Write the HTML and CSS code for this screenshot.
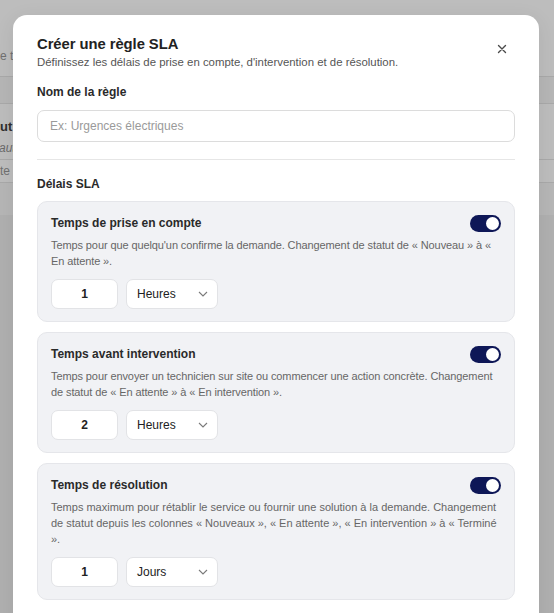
FILE: index.html
```html
<!DOCTYPE html>
<html lang="fr">
<head>
<meta charset="utf-8">
<link rel="stylesheet" href="styles.css">
</head>
<body>
<div class="page">
  <div class="bg-top"><span class="bg-text">e traitement des demandes</span></div>
  <div class="bg-head"></div>
  <div class="bg-row bg-row-tall"><span class="bg-bold">ut actif</span><span class="bg-italic">aut par défaut</span></div>
  <div class="bg-row"><span class="bg-text">te urgente</span></div>
  <div class="bg-band"></div>
  <div class="bg-rest"></div>
</div>

<div class="modal">
  <div class="modal-head">
    <div class="head-text">
      <h1 class="modal-title">Créer une règle SLA</h1>
      <p class="modal-sub">Définissez les délais de prise en compte, d'intervention et de résolution.</p>
    </div>
    <button class="close" aria-label="Fermer">
      <svg width="10" height="10" viewBox="0 0 10 10"><path d="M1.5 1.5 L8.5 8.5 M8.5 1.5 L1.5 8.5" stroke="#4a4a4a" stroke-width="1.4" stroke-linecap="round"/></svg>
    </button>
  </div>

  <label class="field-label">Nom de la règle</label>
  <div class="text-input">Ex: Urgences électriques</div>

  <div class="divider"></div>

  <div class="section-title">Délais SLA</div>

  <div class="cards">
    <div class="card">
      <div class="card-head">
        <span class="card-title">Temps de prise en compte</span>
        <span class="toggle"><span class="knob"></span></span>
      </div>
      <p class="card-desc">Temps pour que quelqu'un confirme la demande. Changement de statut de « Nouveau » à « En attente ».</p>
      <div class="controls">
        <div class="num">1</div>
        <div class="select"><span>Heures</span><svg width="10" height="6" viewBox="0 0 10 6"><path d="M1 1 L5 5 L9 1" fill="none" stroke="#7a7a7a" stroke-width="1.1"/></svg></div>
      </div>
    </div>

    <div class="card">
      <div class="card-head">
        <span class="card-title">Temps avant intervention</span>
        <span class="toggle"><span class="knob"></span></span>
      </div>
      <p class="card-desc">Temps pour envoyer un technicien sur site ou commencer une action concrète. Changement de statut de « En attente » à « En intervention ».</p>
      <div class="controls">
        <div class="num">2</div>
        <div class="select"><span>Heures</span><svg width="10" height="6" viewBox="0 0 10 6"><path d="M1 1 L5 5 L9 1" fill="none" stroke="#7a7a7a" stroke-width="1.1"/></svg></div>
      </div>
    </div>

    <div class="card">
      <div class="card-head">
        <span class="card-title">Temps de résolution</span>
        <span class="toggle"><span class="knob"></span></span>
      </div>
      <p class="card-desc card-desc-loose">Temps maximum pour rétablir le service ou fournir une solution à la demande. Changement de statut depuis les colonnes « Nouveaux », « En attente », « En intervention » à « Terminé ».</p>
      <div class="controls">
        <div class="num">1</div>
        <div class="select"><span>Jours</span><svg width="10" height="6" viewBox="0 0 10 6"><path d="M1 1 L5 5 L9 1" fill="none" stroke="#7a7a7a" stroke-width="1.1"/></svg></div>
      </div>
    </div>
  </div>
</div>
</body>
</html>
```
FILE: styles.css
```css
* { box-sizing: border-box; }
html, body {
  margin: 0;
  padding: 0;
  height: 613px;
  overflow: hidden;
  font-family: "Liberation Sans", Arial, sans-serif;
  background: #b0b0b0;
}
.page {
  display: flex;
  flex-direction: column;
  height: 613px;
  overflow: hidden;
}
.bg-top {
  height: 77px;
  background: #bdbdbd;
  border-bottom: 1px solid #a9a9a9;
  display: flex;
  align-items: flex-end;
  padding-bottom: 13px;
}
.bg-text {
  font-size: 12px;
  color: #707070;
  white-space: nowrap;
}
.bg-head {
  height: 27px;
  background: #b6b6b6;
  border-bottom: 1px solid #a9a9a9;
}
.bg-row {
  background: #bdbdbd;
  border-bottom: 1px solid #a9a9a9;
  display: flex;
  flex-direction: column;
  justify-content: center;
  height: 23px;
}
.bg-row-tall {
  height: 56px;
  justify-content: flex-start;
  padding-top: 16px;
  gap: 8px;
}
.bg-bold {
  font-size: 13px;
  line-height: 14px;
  font-weight: 700;
  color: #2f2f2f;
  white-space: nowrap;
}
.bg-italic {
  font-size: 12px;
  line-height: 13px;
  font-style: italic;
  color: #6a6a6a;
  margin-left: -1px;
  white-space: nowrap;
}
.bg-band {
  height: 32px;
  background: #b6b6b6;
}
.bg-rest {
  flex: 1;
  background: #b0b0b0;
}

.modal {
  position: absolute;
  left: 13px;
  top: 15px;
  width: 526px;
  height: 640px;
  background: #fff;
  border-radius: 14px;
  padding: 20px 24px 20px 24px;
  box-shadow: 0 4px 20px rgba(0,0,0,0.08);
}
.modal-head {
  display: flex;
  justify-content: space-between;
  align-items: flex-start;
}
.head-text {
  display: flex;
  flex-direction: column;
  gap: 1px;
}
.modal-title {
  margin: 0;
  font-size: 14.8px;
  font-weight: 700;
  color: #222;
  line-height: 18px;
  letter-spacing: -0.05px;
}
.modal-sub {
  margin: 0;
  font-size: 11.4px;
  color: #555;
  line-height: 17px;
}
.close {
  background: none;
  border: 0;
  padding: 0;
  margin: 9px 8px 0 0;
  width: 10px;
  height: 10px;
  display: flex;
}
.field-label {
  display: block;
  margin-top: 12px;
  font-size: 12px;
  font-weight: 700;
  color: #2a2a2a;
  line-height: 18px;
}
.text-input {
  margin-top: 9px;
  height: 32px;
  border: 1px solid #dcdcdc;
  border-radius: 7px;
  padding: 0 12px;
  display: flex;
  align-items: center;
  font-size: 12px;
  color: #9a9a9a;
}
.divider {
  margin-top: 17px;
  height: 1px;
  background: #e6e6e6;
}
.section-title {
  margin-top: 15px;
  font-size: 12px;
  font-weight: 700;
  color: #2a2a2a;
  line-height: 18px;
}
.cards {
  margin-top: 8px;
  display: flex;
  flex-direction: column;
  gap: 10px;
}
.card {
  background: #f1f2f5;
  border: 1px solid #e5e6ea;
  border-radius: 10px;
  padding: 11px 13px 12px;
}
.card-head {
  display: flex;
  justify-content: space-between;
  align-items: center;
  height: 20px;
}
.card-title {
  font-size: 12px;
  font-weight: 700;
  color: #2a2a2a;
}
.toggle {
  width: 31px;
  height: 17px;
  border-radius: 9px;
  background: #0e1757;
  display: flex;
  justify-content: flex-end;
  align-items: center;
  padding: 2px;
}
.knob {
  width: 13px;
  height: 13px;
  border-radius: 50%;
  background: #fff;
}
.card-desc {
  margin: 4px 0 0;
  font-size: 11px;
  line-height: 16px;
  letter-spacing: -0.1px;
  color: #666;
}
.card-desc-loose {
  letter-spacing: 0;
}
.controls {
  margin-top: 10px;
  display: flex;
  gap: 8px;
}
.num {
  width: 67px;
  height: 30px;
  background: #fff;
  border: 1px solid #e2e3e6;
  border-radius: 7px;
  display: flex;
  align-items: center;
  justify-content: center;
  font-size: 12px;
  font-weight: 700;
  color: #222;
}
.select {
  width: 92px;
  height: 30px;
  background: #fff;
  border: 1px solid #e2e3e6;
  border-radius: 7px;
  display: flex;
  align-items: center;
  justify-content: space-between;
  padding: 0 9px 0 10px;
  font-size: 12px;
  color: #222;
}
```
